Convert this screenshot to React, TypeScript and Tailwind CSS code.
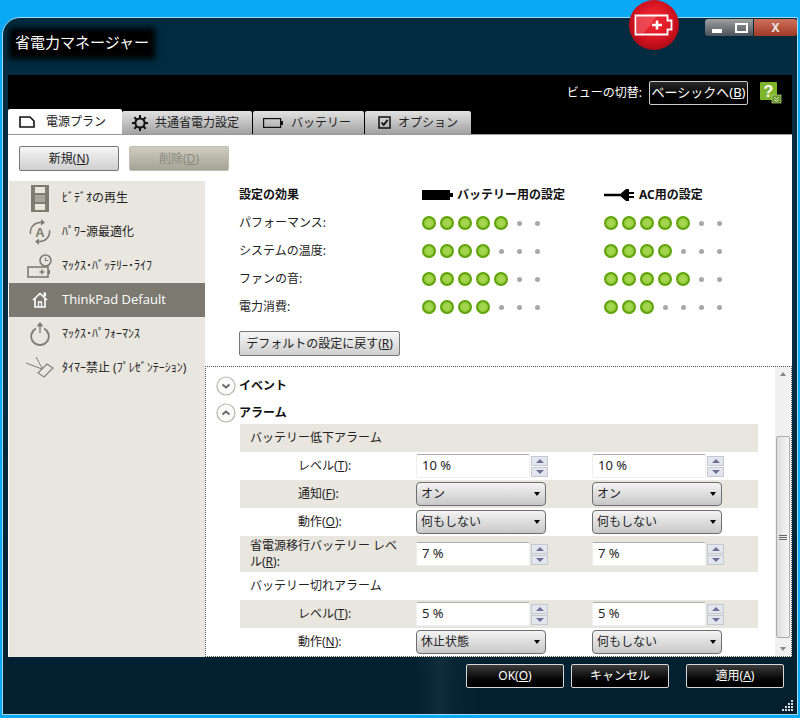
const sans = 'font-["Noto_Sans","Noto_Sans_CJK_JP",sans-serif]';

function Ul({ c }: { c: string }) {
    return <span className="underline">{c}</span>;
}

function Dots({ on }: { on: number }) {
    return (
        <div className="flex w-[126px] items-center">
            {[0, 1, 2, 3, 4, 5, 6].map((i) => (
                <div key={i} className="flex w-[18px] justify-center">
                    {i < on ? (
                        <div className="h-[14px] w-[14px] rounded-full border-2 border-[#5fa20a] bg-[radial-gradient(circle,#a6d64e_30%,#84bf2c_100%)]" />
                    ) : (
                        <div className="h-[5px] w-[5px] rounded-full bg-[#a8a8ac]" />
                    )}
                </div>
            ))}
        </div>
    );
}

function EffectRow({ label, a, b }: { label: string; a: number; b: number }) {
    return (
        <div className="flex h-[28px] items-center">
            <div className="w-[181px] text-[12px] text-[#222]">{label}</div>
            <Dots on={a} />
            <div className="w-[56px]" />
            <Dots on={b} />
        </div>
    );
}

function Spin({ value }: { value: string }) {
    return (
        <div className="flex h-[24px] w-[132px] items-center">
            <div className="flex h-[24px] w-[114px] items-center rounded-[2px] border border-t-[#aaa] border-r-[#eee] border-b-[#eee] border-l-[#eee] bg-white pl-[5px] text-[13px] text-[#222]">
                {value}
            </div>
            <div className="ml-[1px] flex w-[17px] flex-col gap-[1px]">
                <div className="flex h-[10px] items-center justify-center border border-[#c4c8d4] bg-[#e4e6ee]">
                    <div className="h-0 w-0 border-x-[4px] border-b-[4px] border-x-transparent border-b-[#6f6f9a]" />
                </div>
                <div className="flex h-[10px] items-center justify-center border border-[#c4c8d4] bg-[#e4e6ee]">
                    <div className="h-0 w-0 border-x-[4px] border-t-[4px] border-x-transparent border-t-[#6f6f9a]" />
                </div>
            </div>
        </div>
    );
}

function Select({ value }: { value: string }) {
    return (
        <div className="flex h-[24px] w-[130px] items-center justify-between rounded-[4px] border border-[#6e6e6e] bg-gradient-to-b from-[#f4f4f4] to-[#c8c8c8] pr-[5px] pl-[4px] text-[12px] text-[#222]">
            <span>{value}</span>
            <div className="h-0 w-0 border-x-[3px] border-t-[4px] border-x-transparent border-t-black" />
        </div>
    );
}

function Row({ label, band, children, tall }: { label: React.ReactNode; band?: boolean; children: React.ReactNode; tall?: boolean }) {
    return (
        <div className={`flex items-center text-[12px] text-[#222] ${tall ? 'h-[36px]' : 'h-[28px]'} ${band ? 'bg-[#e9e6df]' : 'bg-white'}`}>
            <div className={tall ? 'w-[176px] pl-[10px] leading-[16px] whitespace-nowrap' : 'w-[176px] pl-[58px]'}>{label}</div>
            {children}
        </div>
    );
}

function Chevron({ up }: { up?: boolean }) {
    return (
        <svg width="20" height="20" viewBox="0 0 20 20" className="shrink-0">
            <circle cx="10" cy="10" r="9" fill="#fafafa" stroke="#b4b4ae" strokeWidth="1.2" />
            <path d={up ? 'M6.5 11.5 10 8.5l3.5 3' : 'M6.5 8.5 10 11.5l3.500-3'} fill="none" stroke="#666" strokeWidth="1.800" />
        </svg>
    );
}

const FootBtn = ({ children }: { children: React.ReactNode }) => (
    <div className="flex h-[24px] w-[98px] items-center justify-center rounded-[2px] border border-[#d8d8d8] bg-gradient-to-b from-[#3c3c3c] to-[#000] text-[12px] text-white">
        {children}
    </div>
);

function SideItem({ icon, children, active }: { icon: React.ReactNode; children: React.ReactNode; active?: boolean }) {
    return (
        <div className={`flex h-[34px] items-center ${active ? 'bg-[#7b7970] text-white' : 'text-[#222]'}`}>
            <div className="flex w-[53px] justify-center pl-[8px]">{icon}</div>
            <div className="whitespace-nowrap text-[12px]">{children}</div>
        </div>
    );
}

const gray = '#7f7d72';

export default function App() {
    return (
        <div className={`relative flex h-[718px] w-[800px] flex-col overflow-hidden bg-[#0aa8f5] pt-[17px] pr-[2px] pb-[3px] pl-[2px] ${sans}`}>
            <div className="flex flex-1 flex-col rounded-tl-[18px] rounded-tr-[2px] border border-[#a9dcf2] bg-gradient-to-b from-[#022b3f] via-[#022b3f] to-[#03202f] pl-[5px] pr-[5px]">
                {/* title */}
                <div className="flex h-[57px] justify-between">
                    <div className="mt-[14px] ml-[5px] h-[23px] bg-black px-[2px] text-[15px] leading-[20px] text-white shadow-[0_0_6px_4px_#000]">省電力マネージャー</div>
                    <div className="-mr-[5px] mt-[1px] flex h-[17px]">
                        <div className="flex w-[24px] items-end justify-center rounded-l-[3px] bg-gradient-to-b from-[#a0a0a0] to-[#4c545a] pb-[3px]">
                            <div className="h-[4px] w-[10px] bg-white" />
                        </div>
                        <div className="flex w-[24px] items-center justify-center bg-gradient-to-b from-[#a0a0a0] to-[#4c545a]">
                            <div className="h-[10px] w-[13px] border-2 border-white" />
                        </div>
                        <div className="ml-[1px] flex w-[43px] items-center justify-center rounded-r-[3px] bg-gradient-to-b from-[#d0705c] to-[#a03a24] text-[12px] font-bold leading-none text-[#e4e4e4]">X</div>
                    </div>
                </div>
                {/* black band */}
                <div className="flex h-[60px] flex-col justify-between bg-black">
                    <div className="flex items-center justify-end pt-[6px] pr-[10px]">
                        <span className="mr-[7px] text-[12px] text-white">ビューの切替:</span>
                        <div className="flex h-[24px] w-[99px] items-center justify-center rounded-[2px] border border-[#ccc] bg-gradient-to-b from-[#2a2a2a] to-[#000] text-[13px] text-white">
                            ベーシックへ(<Ul c="B" />)
                        </div>
                        <svg width="22" height="22" viewBox="0 0 22 22" className="ml-[12px]">
                            <rect x="0" y="0" width="17" height="18" rx="1" fill="#7fb52c" />
                            <text x="8.5" y="15" textAnchor="middle" fontSize="16" fontWeight="bold" fill="#fff" fontFamily="Liberation Sans">?</text>
                            <rect x="12" y="13" width="9" height="8" fill="#5e8f1e" stroke="#c8e090" strokeWidth="0.7" />
                            <path d="M14 15l2.5 1.8L19 15M14 17.5l2.5 1.8 2.5-1.8" fill="none" stroke="#fff" strokeWidth="0.9" />
                        </svg>
                    </div>
                    <div className="flex h-[25px] items-end border-b border-[#999]">
                        <div className="flex h-[25px] w-[114px] items-center rounded-t-[2px] bg-white pl-[11px] text-[12px] text-[#222]">
                            <svg width="16" height="12" viewBox="0 0 16 12">
                                <path d="M1 1h10l4 4v6H1z" fill="none" stroke="#111" strokeWidth="1.6" />
                            </svg>
                            <span className="ml-[11px]">電源プラン</span>
                        </div>
                        <div className="flex h-[23px] w-[130px] items-center rounded-t-[2px] bg-gradient-to-b from-[#e2e2e2] to-[#a2a2a2] pl-[10px] text-[12px] text-[#222]">
                            <svg width="16" height="16" viewBox="0 0 16 16">
                                <circle cx="8" cy="8" r="4.6" fill="none" stroke="#111" strokeWidth="2" />
                                <path d="M8 0v3M8 13v3M0 8h3M13 8h3M2.3 2.3l2.1 2.1M11.6 11.6l2.1 2.1M13.7 2.3l-2.1 2.1M4.4 11.6l-2.1 2.1" stroke="#111" strokeWidth="2" />
                            </svg>
                            <span className="ml-[7px]">共通省電力設定</span>
                        </div>
                        <div className="ml-[1px] flex h-[23px] w-[111px] items-center rounded-t-[2px] bg-gradient-to-b from-[#e2e2e2] to-[#a2a2a2] pl-[10px] text-[12px] text-[#222]">
                            <svg width="20" height="10" viewBox="0 0 20 10">
                                <rect x="0.6" y="0.6" width="17" height="8.8" fill="none" stroke="#111" strokeWidth="1.2" />
                                <rect x="18" y="3" width="2" height="4" fill="#111" />
                            </svg>
                            <span className="ml-[8px]">バッテリー</span>
                        </div>
                        <div className="ml-[1px] flex h-[23px] w-[106px] items-center rounded-t-[2px] bg-gradient-to-b from-[#e2e2e2] to-[#a2a2a2] pl-[13px] text-[12px] text-[#222]">
                            <svg width="13" height="13" viewBox="0 0 13 13">
                                <rect x="1" y="1" width="11" height="11" fill="none" stroke="#111" strokeWidth="1.5" />
                                <path d="M3.5 6.5l2.2 2.4 4-5" fill="none" stroke="#111" strokeWidth="1.8" />
                            </svg>
                            <span className="ml-[7px]">オプション</span>
                        </div>
                    </div>
                </div>
                {/* content */}
                <div className="flex h-[522px] flex-col bg-white">
                    <div className="flex h-[46px] gap-[10px] pt-[11px] pl-[11px]">
                        <div className="flex h-[25px] w-[100px] items-center justify-center rounded-[2px] border border-[#777] bg-gradient-to-b from-[#f6f6f6] to-[#cfcfcf] text-[12px] text-[#222]">
                            新規(<Ul c="N" />)
                        </div>
                        <div className="flex h-[25px] w-[100px] items-center justify-center rounded-[2px] border border-[#c0bdb0] bg-gradient-to-b from-[#cfccc0] to-[#a5a396] text-[12px] text-[#8a887c]">
                            削除(<Ul c="D" />)
                        </div>
                    </div>
                    <div className="flex flex-1 pl-[1px]">
                        <div className="w-[196px] bg-[#e9e6df]">
                            <SideItem icon={
                                <svg width="18" height="27" viewBox="0 0 18 27">
                                    <rect width="18" height="27" fill={gray} />
                                    <rect x="4" y="2" width="10" height="6" fill="#e9e6df" />
                                    <rect x="4" y="10" width="10" height="7" fill="#a8a69c" />
                                    <rect x="4" y="19" width="10" height="6" fill="#e9e6df" />
                                </svg>
                            }>ﾋﾞﾃﾞｵの再生</SideItem>
                            <SideItem icon={
                                <svg width="24" height="26" viewBox="0 0 24 26">
                                    <path d="M2.500 15a10 10 0 0 1 11-11.500M21.500 11a10 10 0 0 1-11 11.500" fill="none" stroke={gray} strokeWidth="1.500" />
                                    <path d="M13 0l4 3.500-4 3zM11 26l-4-3.500 4-3z" fill={gray} />
                                    <text x="12" y="17.500" textAnchor="middle" fontSize="13" fontWeight="bold" fill={gray} fontFamily="Liberation Sans">A</text>
                                </svg>
                            }>ﾊﾟﾜｰ源最適化</SideItem>
                            <SideItem icon={
                                <svg width="25" height="25" viewBox="0 0 25 25">
                                    <circle cx="18.500" cy="6.500" r="5.500" fill="none" stroke={gray} strokeWidth="1.600" />
                                    <path d="M18.500 3.500v3h3" fill="none" stroke={gray} strokeWidth="1.200" />
                                    <rect x="1" y="13" width="20" height="10" fill="#e9e6df" stroke={gray} strokeWidth="1.600" />
                                    <rect x="21" y="16" width="2" height="4" fill={gray} />
                                    <path d="M15 15.500v5M12.500 18h5" stroke={gray} strokeWidth="1.400" />
                                </svg>
                            }>ﾏｯｸｽ･ﾊﾞｯﾃﾘｰ･ﾗｲﾌ</SideItem>
                            <SideItem active icon={
                                <svg width="16" height="16" viewBox="0 0 16 16">
                                    <path d="M1 8l7-6.500L15 8M3 6.500V15h10V6.500" fill="none" stroke="#fff" strokeWidth="1.600" />
                                    <path d="M6.500 15v-5h3v5" fill="none" stroke="#fff" strokeWidth="1.300" />
                                    <rect x="11.500" y="0.500" width="2.500" height="4" fill="#fff" />
                                </svg>
                            }><span className={'text-[13px] font-["Open_Sans",sans-serif]'}>ThinkPad Default</span></SideItem>
                            <SideItem icon={
                                <svg width="20" height="24" viewBox="0 0 20 24">
                                    <path d="M6 6.500a8.800 8.800 0 1 0 8 0" fill="none" stroke={gray} strokeWidth="1.800" />
                                    <path d="M10 11V3" stroke={gray} strokeWidth="1.400" />
                                    <path d="M6.500 4.500L10 0l3.500 4.500z" fill={gray} />
                                </svg>
                            }>ﾏｯｸｽ･ﾊﾟﾌｫｰﾏﾝｽ</SideItem>
                            <SideItem icon={
                                <svg width="28" height="24" viewBox="0 0 28 24">
                                    <path d="M0 7l16 6M10 1l6 11" stroke={gray} strokeWidth="1" fill="none" />
                                    <path d="M12 17l9-9 6 4-9 9z" fill="#e9e6df" stroke={gray} strokeWidth="1.100" />
                                </svg>
                            }>ﾀｲﾏｰ禁止 (ﾌﾟﾚｾﾞﾝﾃｰｼｮﾝ)</SideItem>
                        </div>
                        <div className="flex flex-1 flex-col">
                            {/* effects */}
                            <div className="h-[185px] pl-[34px]">
                                <div className="flex h-[28px] items-center text-[12px] font-bold text-[#111]">
                                    <div className="w-[183px]">設定の効果</div>
                                    <svg width="32" height="10" viewBox="0 0 32 10">
                                        <rect width="28" height="10" fill="#000" />
                                        <rect x="28" y="3" width="3" height="4" fill="#000" />
                                    </svg>
                                    <div className="ml-[3px] w-[147px]">バッテリー用の設定</div>
                                    <svg width="31" height="14" viewBox="0 0 31 14">
                                        <path d="M0 7h16" stroke="#000" strokeWidth="2.500" />
                                        <path d="M15 7l7-6h3v3h5v2h-5v2h5v2h-5v3h-3z" fill="#000" />
                                    </svg>
                                    <div className="ml-[4px]">AC用の設定</div>
                                </div>
                                <EffectRow label="パフォーマンス:" a={5} b={5} />
                                <EffectRow label="システムの温度:" a={4} b={4} />
                                <EffectRow label="ファンの音:" a={5} b={5} />
                                <EffectRow label="電力消費:" a={4} b={3} />
                                <div className="mt-[10px] flex h-[25px] w-[161px] items-center justify-center rounded-[2px] border border-[#777] bg-gradient-to-b from-[#f6f6f6] to-[#cfcfcf] text-[12px] text-[#222]">
                                    デフォルトの設定に戻す(<Ul c="R" />)
                                </div>
                            </div>
                            {/* alarm pane */}
                            <div className="flex h-[291px] border border-dotted border-[#555]">
                                <div className="flex-1 overflow-hidden">
                                    <div className="flex h-[34px] items-center gap-[3px] pt-[3px] pl-[10px] text-[12px] font-bold text-[#111]">
                                        <Chevron />
                                        イベント
                                    </div>
                                    <div className="flex h-[23px] items-center gap-[3px] pt-[1px] pl-[10px] text-[12px] font-bold text-[#111]">
                                        <Chevron up />
                                        アラーム
                                    </div>
                                    <div className="mr-[17px] ml-[34px]">
                                        <div className="flex h-[28px] items-center bg-[#e9e6df] pl-[10px] text-[12px] text-[#222]">バッテリー低下アラーム</div>
                                        <Row label={<>レベル(<Ul c="T" />):</>}><Spin value="10 %" /><div className="w-[44px]" /><Spin value="10 %" /></Row>
                                        <Row band label={<>通知(<Ul c="F" />):</>}><Select value="オン" /><div className="w-[46px]" /><Select value="オン" /></Row>
                                        <Row label={<>動作(<Ul c="O" />):</>}><Select value="何もしない" /><div className="w-[46px]" /><Select value="何もしない" /></Row>
                                        <Row tall band label={<>省電源移行バッテリー レベ<br />ル(<Ul c="R" />):</>}><Spin value="7 %" /><div className="w-[44px]" /><Spin value="7 %" /></Row>
                                        <div className="flex h-[28px] items-center pl-[10px] text-[12px] text-[#222]">バッテリー切れアラーム</div>
                                        <Row band label={<>レベル(<Ul c="T" />):</>}><Spin value="5 %" /><div className="w-[44px]" /><Spin value="5 %" /></Row>
                                        <Row label={<>動作(<Ul c="N" />):</>}><Select value="休止状態" /><div className="w-[46px]" /><Select value="何もしない" /></Row>
                                    </div>
                                </div>
                                <div className="flex w-[16px] flex-col items-center bg-[#f0f0f0]">
                                    <div className="mt-[5px] h-0 w-0 border-x-[3px] border-b-[4px] border-x-transparent border-b-[#888]" />
                                    <div className="mt-[60px] flex h-[202px] w-[14px] flex-col items-center justify-center gap-[1px] rounded-[2px] border border-[#aaa] bg-gradient-to-r from-[#ddd] to-[#f4f4f4]">
                                        <div className="h-[1px] w-[8px] bg-[#666]" />
                                        <div className="h-[1px] w-[8px] bg-[#666]" />
                                        <div className="h-[1px] w-[8px] bg-[#666]" />
                                    </div>
                                    <div className="mt-[9px] h-0 w-0 border-x-[3px] border-t-[4px] border-x-transparent border-t-[#888]" />
                                </div>
                            </div>
                        </div>
                    </div>
                </div>
                {/* footer */}
                <div className="-mx-[5px] flex flex-1 items-start justify-end bg-[linear-gradient(90deg,transparent_52%,rgba(255,255,255,0.05)_55%,rgba(255,255,255,0.02)_57%,transparent_60%)] pt-[7px] pr-[13px]">
                    <FootBtn>OK(<Ul c="O" />)</FootBtn>
                    <div className="w-[7px]" />
                    <FootBtn>キャンセル</FootBtn>
                    <div className="w-[17px]" />
                    <FootBtn>適用(<Ul c="A" />)</FootBtn>
                </div>
            </div>
            {/* battery badge */}
            <div className="absolute top-0 left-[629px] h-[50px] w-[50px] rounded-full bg-[radial-gradient(circle_at_50%_42%,#e8222c_25%,#c80f1c_60%,#7a0a12_100%)]">
                <svg width="50" height="50" viewBox="0 0 50 50">
                    <path d="M8 16h20L15 33H8z" fill="#f0606a" opacity="0.6" />
                    <path d="M6.500 15.500h32v5h4v9h-4v5h-32z" fill="none" stroke="#fff" strokeWidth="1.800" />
                    <path d="M23 25h10M28 20.500v9" stroke="#fff" strokeWidth="2.600" />
                </svg>
            </div>
            {/* resize grip */}
            <svg width="12" height="12" viewBox="0 0 12 12" className="absolute top-[700px] left-[782px]">
                <path d="M9 0h2v2H9zM6 3h2v2H6zM9 3h2v2H9zM3 6h2v2H3zM6 6h2v2H6zM9 6h2v2H9zM0 9h2v2H0zM3 9h2v2H3zM6 9h2v2H6zM9 9h2v2H9z" fill="#d8dde0" />
            </svg>
        </div>
    );
}
